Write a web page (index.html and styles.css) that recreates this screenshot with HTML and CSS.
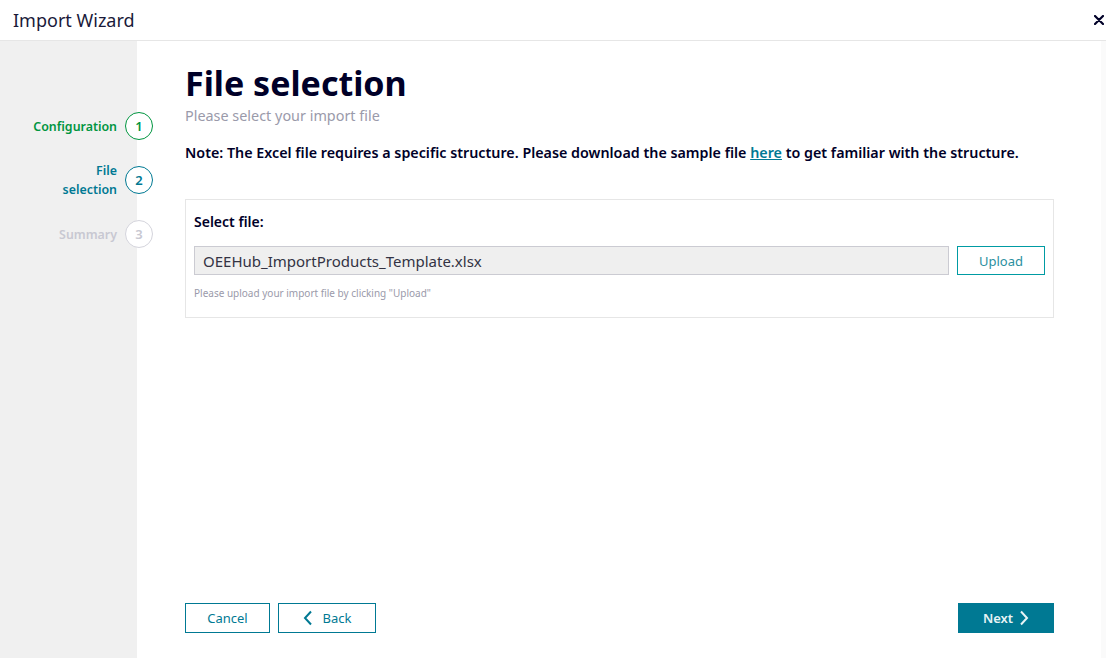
FILE: index.html
```html
<!DOCTYPE html>
<html lang="en">
<head>
    <meta charset="UTF-8">
    <meta name="viewport" content="width=device-width, initial-scale=1.0">
    <title>Import Wizard</title>
    <link rel="stylesheet" href="styles.css">
</head>
<body>
    <div class="dialog">
        <div class="dialog-header">
            <h1>Import Wizard</h1>
            <button class="close-btn" aria-label="Close">
                <svg width="10" height="10" viewBox="0 0 10 10"><path d="M1 1L9 9M9 1L1 9" stroke="#000028" stroke-width="2.2" stroke-linecap="round"/></svg>
            </button>
        </div>

        <div class="dialog-body">
            <!-- Wizard steps -->
            <div class="steps">
                <div class="step step-done">
                    <span class="step-label">Configuration</span>
                    <span class="step-bubble">1</span>
                </div>
                <div class="step step-active">
                    <span class="step-label">File<br>selection</span>
                    <span class="step-bubble">2</span>
                </div>
                <div class="step step-todo">
                    <span class="step-label">Summary</span>
                    <span class="step-bubble">3</span>
                </div>
            </div>

            <div class="content">
                <h2>File selection</h2>
                <p class="subtitle">Please select your import file</p>
                <p class="note">Note: The Excel file requires a specific structure. Please download the sample file <a href="#">here</a> to get familiar with the structure.</p>

                <div class="file-card">
                    <h4>Select file:</h4>
                    <div class="file-row">
                        <div class="file-input">OEEHub_ImportProducts_Template.xlsx</div>
                        <button class="btn btn-outline-light">Upload</button>
                    </div>
                    <p class="hint">Please upload your import file by clicking "Upload"</p>
                </div>

                <div class="wizard-actions">
                    <div class="left-actions">
                        <button class="btn btn-outline btn-cancel">Cancel</button>
                        <button class="btn btn-outline btn-back">
                            <svg width="10" height="16" viewBox="0 0 10 16"><path d="M8 1.5L2 8l6 6.5" fill="none" stroke="currentColor" stroke-width="2"/></svg>
                            Back
                        </button>
                    </div>
                    <button class="btn btn-primary btn-next">
                        Next
                        <svg width="10" height="16" viewBox="0 0 10 16"><path d="M2 1.5L8 8l-6 6.5" fill="none" stroke="currentColor" stroke-width="2"/></svg>
                    </button>
                </div>
            </div>

            <div class="scroll-track"></div>
        </div>
    </div>
</body>
</html>
```

FILE: styles.css
```css
:root {
    --ink: #000028;
    --petrol: #007993;
    --cyan: #009ba3;
    --green: #00953f;
    --muted: #9a9aaa;
}

body {
    font-family: 'Noto Sans', 'Open Sans', sans-serif;
    margin: 0;
    background: white;
    color: var(--ink);
}

.dialog {
    width: 1106px;
    height: 658px;
    display: flex;
    flex-direction: column;
    overflow: hidden;
}

.dialog-header {
    height: 40px;
    border-bottom: 1px solid #e6e6e6;
    display: flex;
    align-items: center;
    justify-content: space-between;
    padding: 0 2px 0 13px;
    flex-shrink: 0;
}

.dialog-header h1 {
    margin: 0;
    font-size: 18px;
    font-weight: 400;
    color: #1a1a3a;
}

.close-btn {
    background: none;
    border: none;
    padding: 0;
    width: 10px;
    height: 10px;
    display: flex;
    cursor: pointer;
}

.dialog-body {
    flex: 1;
    display: flex;
    min-height: 0;
}

/* Steps */
.steps {
    width: 137px;
    flex-shrink: 0;
    background: #f0f0f0;
    display: flex;
    flex-direction: column;
    gap: 21px;
    padding-top: 71px;
    box-sizing: border-box;
    position: relative;
    z-index: 1;
}

.step {
    display: flex;
    align-items: center;
    justify-content: flex-end;
    gap: 8px;
    margin-right: -16px;
}

.step-label {
    font-size: 12.4px;
    font-weight: 600;
    text-align: right;
    line-height: 19px;
}

.step-bubble {
    width: 28px;
    height: 28px;
    box-sizing: border-box;
    border-radius: 50%;
    background: white;
    border: 1px solid #ccc;
    display: flex;
    align-items: center;
    justify-content: center;
    font-size: 13px;
    font-weight: 600;
    flex-shrink: 0;
}

.step-done .step-label,
.step-done .step-bubble {
    color: var(--green);
    border-color: var(--green);
}

.step-active .step-label,
.step-active .step-bubble {
    color: var(--petrol);
    border-color: var(--petrol);
}

.step-todo .step-label,
.step-todo .step-bubble {
    color: #c8c8d2;
    border-color: #d4d4dc;
}

/* Content */
.content {
    flex: 1;
    display: flex;
    flex-direction: column;
    padding: 22px 47px 25px 48px;
}

.content h2 {
    margin: 0;
    font-size: 34px;
    font-weight: 700;
    line-height: 40px;
}

.subtitle {
    margin: 3px 0 0;
    font-size: 14.4px;
    color: var(--muted);
}

.note {
    margin: 18px 0 0;
    font-size: 14.3px;
    font-weight: 600;
}

.note a {
    color: var(--petrol);
}

.file-card {
    margin-top: 37px;
    border: 1px solid #e6e6e6;
    padding: 12px 8px 17px 8px;
}

.file-card h4 {
    margin: 0;
    font-size: 14px;
    font-weight: 600;
}

.file-row {
    display: flex;
    gap: 8px;
    margin-top: 15px;
}

.file-input {
    flex: 1;
    height: 29px;
    box-sizing: border-box;
    background: #efefef;
    border: 1px solid #cbcbd2;
    padding: 0 8px;
    display: flex;
    align-items: center;
    font-size: 15px;
    color: #333344;
}

.hint {
    margin: 11px 0 0;
    font-size: 10px;
    color: #9a9aaa;
}

.btn {
    height: 29px;
    box-sizing: border-box;
    font-family: inherit;
    font-size: 13px;
    background: white;
    cursor: pointer;
    display: flex;
    align-items: center;
    justify-content: center;
    gap: 10px;
    padding: 0;
}

.btn-outline-light {
    width: 88px;
    border: 1px solid var(--cyan);
    color: #2b8fa0;
}

.btn-outline {
    border: 1px solid var(--petrol);
    color: var(--petrol);
}

.btn-primary {
    background: var(--petrol);
    border: none;
    color: #e8f4f6;
    font-weight: 600;
}

.wizard-actions {
    margin-top: auto;
    display: flex;
    justify-content: space-between;
    height: 30px;
}

.left-actions {
    display: flex;
    gap: 8px;
}

.btn-cancel {
    width: 85px;
    height: 30px;
}

.btn-back {
    width: 98px;
    height: 30px;
}

.btn-next {
    width: 96px;
    height: 30px;
    gap: 6px;
}

.scroll-track {
    width: 5px;
    flex-shrink: 0;
    background: #fafafa;
}
```
